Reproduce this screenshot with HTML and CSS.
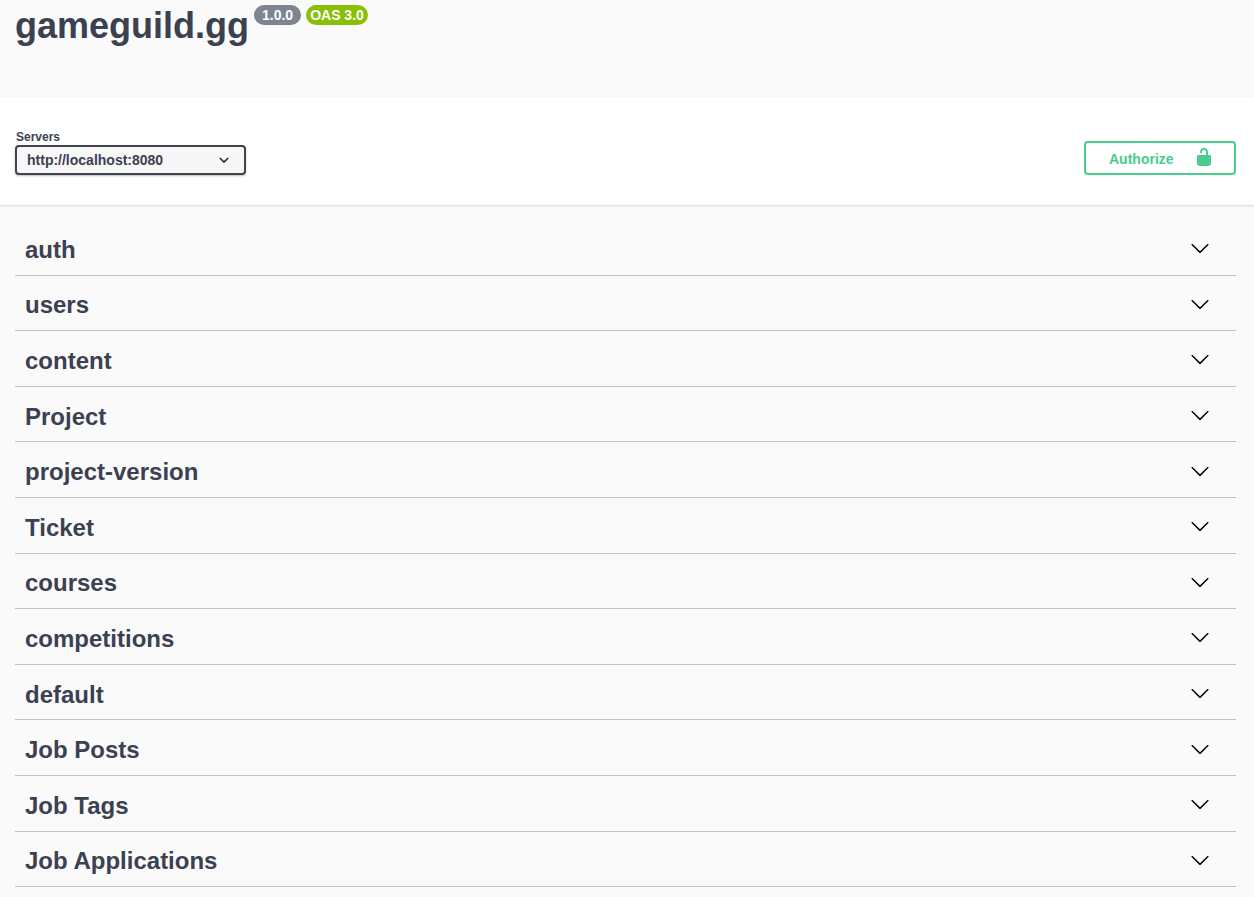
FILE: index.html
```html
<!DOCTYPE html>
<html lang="en">
<head>
    <meta charset="UTF-8">
    <title>gameguild.gg</title>
    <link rel="stylesheet" href="styles.css">
</head>
<body>
    <svg class="sprites" width="0" height="0">
        <symbol id="arrow-down" viewBox="0 0 20 20">
            <path d="M17.418 6.109c.272-.268.709-.268.979 0s.271.701 0 .969l-7.908 7.83c-.27.268-.707.268-.979 0l-7.908-7.83c-.27-.268-.27-.701 0-.969.271-.268.709-.268.979 0L10 13.25l7.418-7.141z"/>
        </symbol>
    </svg>

    <div class="info">
        <h1 class="title">gameguild.gg</h1>
        <span class="stamp stamp-version">1.0.0</span>
        <span class="stamp stamp-oas">OAS 3.0</span>
    </div>

    <div class="scheme">
        <div class="servers">
            <span class="servers-label">Servers</span>
            <div class="server-select">
                <span>http://localhost:8080</span>
                <svg class="select-arrow" viewBox="0 0 20 20"><path d="M13.418 7.859c.271-.268.709-.268.978 0 .27.268.272.701 0 .969l-3.908 3.83c-.27.268-.707.268-.979 0l-3.908-3.83c-.27-.268-.27-.701 0-.969.271-.268.709-.268.978 0L10 11l3.418-3.141z"/></svg>
            </div>
        </div>
        <button class="authorize">
            <span>Authorize</span>
            <svg class="lock" viewBox="0 0 20 20"><path d="M15.8 8H14V5.6C14 2.703 12.665 1 10 1 7.334 1 6 2.703 6 5.6V6h2v-.801C8 3.754 8.797 3 10 3c1.203 0 2 .754 2 2.199V8H4c-.553 0-1 .646-1 1.199V17c0 .549.428 1.139.951 1.307l1.197.387C5.672 18.861 6.55 19 7.1 19h5.8c.549 0 1.428-.139 1.951-.307l1.196-.387c.524-.167.953-.757.953-1.306V9.199C17 8.646 16.352 8 15.8 8z"/></svg>
        </button>
    </div>

    <div class="tags">
        <h3 class="tag"><span>auth</span><svg class="tag-arrow"><use href="#arrow-down"/></svg></h3>
        <h3 class="tag"><span>users</span><svg class="tag-arrow"><use href="#arrow-down"/></svg></h3>
        <h3 class="tag"><span>content</span><svg class="tag-arrow"><use href="#arrow-down"/></svg></h3>
        <h3 class="tag"><span>Project</span><svg class="tag-arrow"><use href="#arrow-down"/></svg></h3>
        <h3 class="tag"><span>project-version</span><svg class="tag-arrow"><use href="#arrow-down"/></svg></h3>
        <h3 class="tag"><span>Ticket</span><svg class="tag-arrow"><use href="#arrow-down"/></svg></h3>
        <h3 class="tag"><span>courses</span><svg class="tag-arrow"><use href="#arrow-down"/></svg></h3>
        <h3 class="tag"><span>competitions</span><svg class="tag-arrow"><use href="#arrow-down"/></svg></h3>
        <h3 class="tag"><span>default</span><svg class="tag-arrow"><use href="#arrow-down"/></svg></h3>
        <h3 class="tag"><span>Job Posts</span><svg class="tag-arrow"><use href="#arrow-down"/></svg></h3>
        <h3 class="tag"><span>Job Tags</span><svg class="tag-arrow"><use href="#arrow-down"/></svg></h3>
        <h3 class="tag"><span>Job Applications</span><svg class="tag-arrow"><use href="#arrow-down"/></svg></h3>
    </div>
</body>
</html>
```

FILE: styles.css
```css
* {
    margin: 0;
    padding: 0;
    box-sizing: border-box;
}

html, body {
    height: 897px;
    overflow: hidden;
}

body {
    background: #fafafa;
    color: #3b4151;
    font-family: "Liberation Sans", Arial, sans-serif;
}

.sprites {
    position: absolute;
}

.info {
    display: flex;
    align-items: flex-start;
    height: 97px;
    padding: 5px 0 0 15px;
}

.title {
    font-size: 36px;
    font-weight: 700;
    line-height: 42px;
    margin-right: 5px;
}

.stamp {
    height: 20px;
    border-radius: 10px;
    color: #fff;
    font-size: 14px;
    font-weight: 700;
    line-height: 20px;
}

.stamp-version {
    background: #7d8492;
    padding: 0 8px;
    margin-right: 5px;
}

.stamp-oas {
    background: #89bf04;
    padding: 0 4px;
}

.scheme {
    display: flex;
    align-items: flex-end;
    justify-content: space-between;
    height: 108px;
    padding: 0 18px 30px 15px;
    background: #fff;
    box-shadow: 0 1px 2px rgba(0, 0, 0, 0.15);
}

.servers-label {
    display: block;
    font-size: 12px;
    font-weight: 700;
    line-height: 14px;
    margin: 0 0 1px 1px;
}

.server-select {
    display: flex;
    align-items: center;
    justify-content: space-between;
    width: 231px;
    height: 30px;
    padding: 0 11px 0 10px;
    background: #f7f7f7;
    border: 2px solid #41444e;
    border-radius: 4px;
    box-shadow: 0 1px 2px rgba(0, 0, 0, 0.25);
    font-size: 14px;
    font-weight: 700;
}

.select-arrow {
    width: 20px;
    height: 20px;
    margin-right: -1px;
    fill: #20232b;
}

.authorize {
    display: flex;
    align-items: center;
    justify-content: space-between;
    width: 152px;
    height: 34px;
    padding: 0 20px 2px 23px;
    background: transparent;
    border: 2px solid #49cc90;
    border-radius: 4px;
    color: #49cc90;
    font-family: inherit;
    font-size: 14px;
    font-weight: 700;
}

.authorize span {
    margin-top: 4px;
}

.lock {
    width: 20px;
    height: 20px;
    fill: #49cc90;
}

.tags {
    padding: 20px 18px 0 15px;
}

.tag {
    display: flex;
    align-items: center;
    justify-content: space-between;
    height: 50.6px;
    margin-bottom: 5px;
    padding: 0 26px 0 10px;
    border-bottom: 1px solid rgba(59, 65, 81, 0.3);
    font-size: 24px;
    font-weight: 700;
}

.tag-arrow {
    width: 20px;
    height: 20px;
    margin-bottom: 3px;
    fill: #000;
}
```
